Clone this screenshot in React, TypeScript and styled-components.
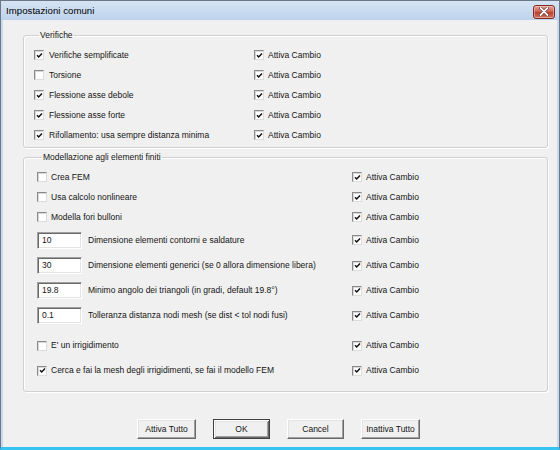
import React from "react";
import styled, { createGlobalStyle } from "styled-components";

const GlobalStyle = createGlobalStyle`
  html, body {
    margin: 0;
    padding: 0;
    background: #f0f0f0;
  }
  * {
    box-sizing: border-box;
  }
`;

const uiFont = `"Liberation Sans", Arial, sans-serif`;

const Window = styled.div`
  width: 560px;
  height: 450px;
  display: flex;
  flex-direction: column;
  border: 1px solid #6d7886;
  border-bottom: 3px solid #35c3ef;
  background: #c9d9ec;
  font-family: ${uiFont};
  color: #141414;
  overflow: hidden;
`;

const TitleBar = styled.div`
  height: 19px;
  flex: none;
  display: flex;
  align-items: center;
  justify-content: space-between;
  padding: 0 4px 0 5px;
  background: linear-gradient(#d6e4f4, #bdd3ec);
`;

const Title = styled.span`
  font-family: ${uiFont};
  font-size: 9.6px;
  color: #000;
  letter-spacing: 0.05px;
`;

const CloseButton = styled.div`
  width: 22px;
  height: 14px;
  margin-top: 2px;
  border: 1px solid #7d2c28;
  border-radius: 3px;
  background: linear-gradient(#e6a49b, #cf6453 45%, #b8402f 55%, #d2756a);
  display: flex;
  align-items: center;
  justify-content: center;
  box-shadow: inset 0 0 0 1px rgba(255, 220, 210, 0.45);
`;

const Client = styled.div`
  flex: 1;
  margin: 0 2px 0 2px;
  background: #f0f0f0;
  display: flex;
  flex-direction: column;
  padding: 9px 9px 0 20px;
`;

const Group = styled.fieldset<{ $padLeft: number; $padBottom: number }>`
  margin: 0;
  min-inline-size: 0;
  padding: 3px 8px ${(p) => p.$padBottom}px ${(p) => p.$padLeft}px;
  border: 1px solid #d0d0d0;
  border-radius: 3px;
  box-shadow: inset 1px 1px 0 #ffffff, 1px 1px 0 #ffffff;
  & + & {
    margin-top: 3px;
  }
`;

const Legend = styled.legend`
  font-size: 8.5px;
  line-height: 13px;
  height: 13px;
  padding: 0 1px;
  margin-left: 5px;
`;

const Row = styled.div<{ $h: number; $first: number }>`
  height: ${(p) => p.$h}px;
  display: grid;
  grid-template-columns: ${(p) => p.$first}px 1fr;
  align-items: center;
`;

const Cell = styled.div`
  display: flex;
  align-items: center;
  white-space: nowrap;
`;

const Label = styled.span<{ $gap?: number }>`
  font-size: 8.5px;
  line-height: 11px;
  margin-left: ${(p) => p.$gap ?? 5}px;
`;

const Box = styled.span`
  width: 10px;
  height: 10px;
  flex: none;
  display: inline-flex;
  align-items: center;
  justify-content: center;
  background: #fff;
  border: 1px solid;
  border-color: #8a8a8a #dcdcdc #dcdcdc #8a8a8a;
  box-shadow: inset 1px 1px 0 #d8d8d8;
`;

const TextBox = styled.div`
  width: 45px;
  height: 17px;
  flex: none;
  background: #fff;
  border: 1px solid;
  border-color: #a0a0a0 #ffffff #ffffff #a0a0a0;
  box-shadow: inset 1px 1px 0 #696969, inset -1px -1px 0 #e3e3e3;
  font-size: 8.5px;
  line-height: 11px;
  padding: 2px 0 0 4px;
`;

const Spacer = styled.div<{ $h: number }>`
  height: ${(p) => p.$h}px;
`;

const ButtonRow = styled.div`
  margin-top: 27px;
  display: flex;
  justify-content: center;
  gap: 17px;
  padding-left: 0;
  margin-left: -14px;
`;

const Button = styled.div<{ $w: number; $default?: boolean }>`
  width: ${(p) => p.$w}px;
  height: 20px;
  display: flex;
  align-items: center;
  justify-content: center;
  font-size: 8.5px;
  background: #f0f0f0;
  border: 1px solid;
  border-color: ${(p) =>
    p.$default ? "#404040" : "#ffffff #696969 #696969 #ffffff"};
  box-shadow: ${(p) =>
    p.$default
      ? "inset 1px 1px 0 #ffffff, inset -1px -1px 0 #696969, inset 2px 2px 0 #e3e3e3, inset -2px -2px 0 #a0a0a0"
      : "inset -1px -1px 0 #a0a0a0, inset 1px 1px 0 #e3e3e3"};
`;

const Check = ({ on }: { on: boolean }) => (
  <Box>
    {on && (
      <svg width="7" height="7" viewBox="0 0 7 7">
        <path d="M1 3.2 L2.7 5 L6 1.6" fill="none" stroke="#111" strokeWidth="1.5" />
      </svg>
    )}
  </Box>
);

const CloseX = () => (
  <svg width="10" height="9" viewBox="0 0 10 9">
    <path d="M1.5 1 L8.5 8 M8.5 1 L1.5 8" stroke="#5a1a14" strokeWidth="3" strokeLinecap="round" />
    <path d="M1.5 1 L8.5 8 M8.5 1 L1.5 8" stroke="#ffffff" strokeWidth="1.8" strokeLinecap="round" />
  </svg>
);

const Cambio = () => (
  <Cell>
    <Check on />
    <Label $gap={4}>Attiva Cambio</Label>
  </Cell>
);

const verifiche: [string, boolean][] = [
  ["Verifiche semplificate", true],
  ["Torsione", false],
  ["Flessione asse debole", true],
  ["Flessione asse forte", true],
  ["Rifollamento: usa sempre distanza minima", true],
];

const checksTop: [string, boolean][] = [
  ["Crea FEM", false],
  ["Usa calcolo nonlineare", false],
  ["Modella fori bulloni", false],
];

const fields: [string, string, number][] = [
  ["10", "Dimensione elementi contorni e saldature", 26],
  ["30", "Dimensione elementi generici (se 0 allora dimensione libera)", 25],
  ["19.8", "Minimo angolo dei triangoli (in gradi, default 19.8°)", 25],
  ["0.1", "Tolleranza distanza nodi mesh (se dist < tol nodi fusi)", 25],
];

const checksBottom: [string, boolean][] = [
  ["E' un irrigidimento", false],
  ["Cerca e fai la mesh degli irrigidimenti, se fai il modello FEM", true],
];

export default function App() {
  return (
    <>
      <GlobalStyle />
      <Window>
        <TitleBar>
          <Title>Impostazioni comuni</Title>
          <CloseButton>
            <CloseX />
          </CloseButton>
        </TitleBar>
        <Client>
          <Group $padLeft={10} $padBottom={2}>
            <Legend>Verifiche</Legend>
            {verifiche.map(([text, on]) => (
              <Row key={text} $h={20} $first={220}>
                <Cell>
                  <Check on={on} />
                  <Label>{text}</Label>
                </Cell>
                <Cambio />
              </Row>
            ))}
          </Group>
          <Group $padLeft={13} $padBottom={8}>
            <Legend>Modellazione agli elementi finiti</Legend>
            {checksTop.map(([text, on]) => (
              <Row key={text} $h={20} $first={315}>
                <Cell>
                  <Check on={on} />
                  <Label $gap={4}>{text}</Label>
                </Cell>
                <Cambio />
              </Row>
            ))}
            {fields.map(([value, text, h]) => (
              <Row key={text} $h={h} $first={315}>
                <Cell>
                  <TextBox>{value}</TextBox>
                  <Label $gap={6}>{text}</Label>
                </Cell>
                <Cambio />
              </Row>
            ))}
            <Spacer $h={5} />
            {checksBottom.map(([text, on]) => (
              <Row key={text} $h={25} $first={315}>
                <Cell>
                  <Check on={on} />
                  <Label $gap={4}>{text}</Label>
                </Cell>
                <Cambio />
              </Row>
            ))}
          </Group>
          <ButtonRow>
            <Button $w={59}>Attiva Tutto</Button>
            <Button $w={57} $default>
              OK
            </Button>
            <Button $w={57}>Cancel</Button>
            <Button $w={59}>Inattiva Tutto</Button>
          </ButtonRow>
        </Client>
      </Window>
    </>
  );
}
